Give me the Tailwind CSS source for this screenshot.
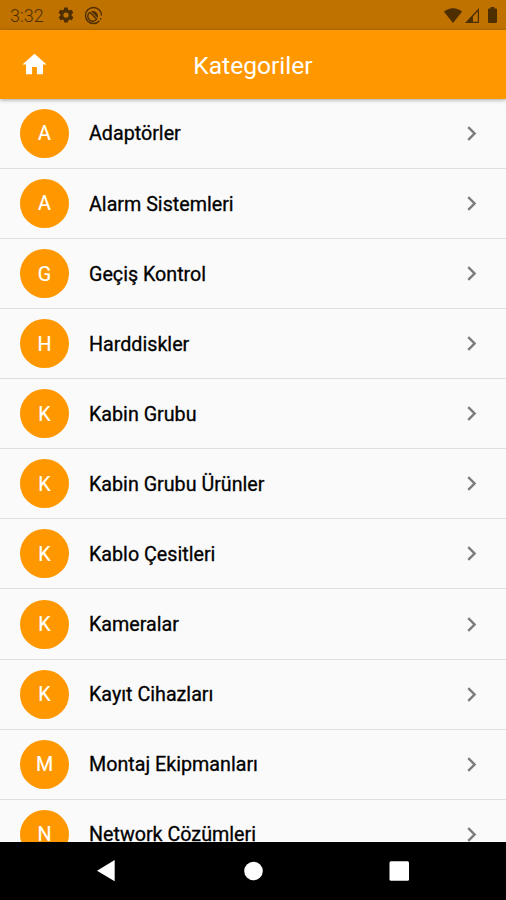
<!DOCTYPE html>
<html lang="tr">
<head>
  <meta charset="UTF-8" />
  <meta name="viewport" content="width=device-width, initial-scale=1.0"/>
  <title>Kategoriler</title>
  <script src="https://cdn.jsdelivr.net/npm/@tailwindcss/browser@4"></script>
</head>
<body class="h-screen overflow-hidden flex flex-col bg-[#fafafa] text-black font-['Roboto',sans-serif]">

  <!-- Status bar -->
  <div class="h-[30px] shrink-0 flex items-center bg-[#bf7200] text-[#4d2e00] pl-[10px] pr-[9px]">
    <span class="text-[18px] leading-none w-[47px] pt-px font-light">3:32</span>
    <svg class="w-[18px] h-[18px] mr-[9px]" viewBox="0 0 24 24" fill="currentColor">
      <path d="M19.4 13c.1-.3.1-.6.1-1s0-.7-.1-1l2.1-1.6c.2-.2.3-.4.1-.7l-2-3.4c-.1-.2-.4-.3-.6-.2l-2.5 1c-.5-.4-1.1-.7-1.7-1l-.4-2.6c0-.3-.2-.5-.5-.5h-4c-.2 0-.5.2-.5.4l-.4 2.7c-.6.2-1.1.6-1.7 1l-2.5-1c-.2-.1-.5 0-.6.2l-2 3.4c-.1.3-.1.5.1.7L4.6 11c0 .3-.1.6-.1 1s0 .7.1 1l-2.1 1.6c-.2.2-.3.4-.1.7l2 3.4c.1.2.4.3.6.2l2.5-1c.5.4 1.1.7 1.7 1l.4 2.7c0 .2.2.4.5.4h4c.2 0 .5-.2.5-.4l.4-2.7c.6-.2 1.1-.6 1.7-1l2.5 1c.2.1.5 0 .6-.2l2-3.4c.1-.2.1-.5-.1-.7zM12 15.5a3.5 3.5 0 1 1 0-7 3.5 3.5 0 0 1 0 7z"/>
    </svg>
    <svg class="w-[19px] h-[19px]" viewBox="0 0 19 19" fill="none" stroke="currentColor" stroke-width="1.4">
      <circle cx="9.5" cy="9.5" r="8" stroke-dasharray="47 1.6 1.6" stroke-dashoffset="-6"/>
      <path d="M5.8 6.2a5 5 0 1 0 7 7"/>
      <path d="M5.8 6.2l7 7"/>
      <path d="M7 5.3c3.8-1.8 8.3 2.5 6.7 6.7z" fill="currentColor" stroke="none"/>
    </svg>
    <svg class="w-[18px] h-[15px] ml-auto mr-[3px]" viewBox="0 0 18 15" fill="currentColor">
      <path d="M9 15L0 3.7C2.5 1.5 5.5.3 9 .3s6.5 1.2 9 3.4z"/>
    </svg>
    <svg class="w-[14px] h-[15px] mr-[9px]" viewBox="0 0 15 15" preserveAspectRatio="none" fill="currentColor">
      <path fill-rule="evenodd" d="M0 15L15 0v15zM8.5 13.7h5.2V3.2L8.5 8.4z"/>
    </svg>
    <svg class="w-[9px] h-4" viewBox="0 0 9 16" fill="currentColor">
      <path d="M2.7 0h3.6v1.5H8a1 1 0 0 1 1 1V15a1 1 0 0 1-1 1H1a1 1 0 0 1-1-1V2.5a1 1 0 0 1 1-1h1.7z"/>
    </svg>
  </div>

  <!-- App bar -->
  <header class="z-10 h-[68.7px] shrink-0 grid grid-cols-[70px_1fr_70px] items-center bg-[#ff9800] text-white shadow-[0_1px_4px_rgba(0,0,0,0.35)]">
    <svg class="w-[29px] h-[29px] ml-5" viewBox="0 0 24 24" fill="currentColor">
      <path d="M10 20v-6h4v6h5v-8h3L12 3 2 12h3v8z"/>
    </svg>
    <h1 class="text-center text-[24.6px] leading-none pt-[3.6px]">Kategoriler</h1>
  </header>

  <!-- Category list -->
  <main class="flex-1 min-h-0 overflow-hidden">
    <ul id="category-list"></ul>
  </main>

  <!-- Navigation bar -->
  <nav class="h-[58px] shrink-0 bg-black text-white">
    <svg class="w-full h-full" viewBox="0 0 506 58" fill="currentColor">
      <path d="M97 28.7L114.7 18v21.3z"/>
      <circle cx="253.5" cy="29" r="9.3"/>
      <rect x="389.5" y="19.3" width="19.5" height="19.5" rx="1.5"/>
    </svg>
  </nav>

  <script>
    const categories = [
      "Adaptörler",
      "Alarm Sistemleri",
      "Geçiş Kontrol",
      "Harddiskler",
      "Kabin Grubu",
      "Kabin Grubu Ürünler",
      "Kablo Çesitleri",
      "Kameralar",
      "Kayıt Cihazları",
      "Montaj Ekipmanları",
      "Network Cözümleri"
    ];

    document.getElementById("category-list").innerHTML = categories.map(name => `
      <li class="h-[70.12px] flex items-center px-5 border-b border-[#dedede]">
        <span class="w-[49px] h-[49px] rounded-full bg-[#ff9800] text-white text-[19.7px] leading-none pt-0.5 flex items-center justify-center [-webkit-text-stroke:0.2px]">${name[0]}</span>
        <span class="ml-5 pt-0.5 text-[19.7px] leading-none [-webkit-text-stroke:0.3px]">${name}</span>
        <svg class="w-[29px] h-[29px] ml-auto text-[#7c7c7c]" viewBox="0 0 24 24" fill="currentColor">
          <path d="M10 6L8.59 7.41 13.17 12l-4.58 4.59L10 18l6-6z"/>
        </svg>
      </li>`).join("");
  </script>
</body>
</html>
